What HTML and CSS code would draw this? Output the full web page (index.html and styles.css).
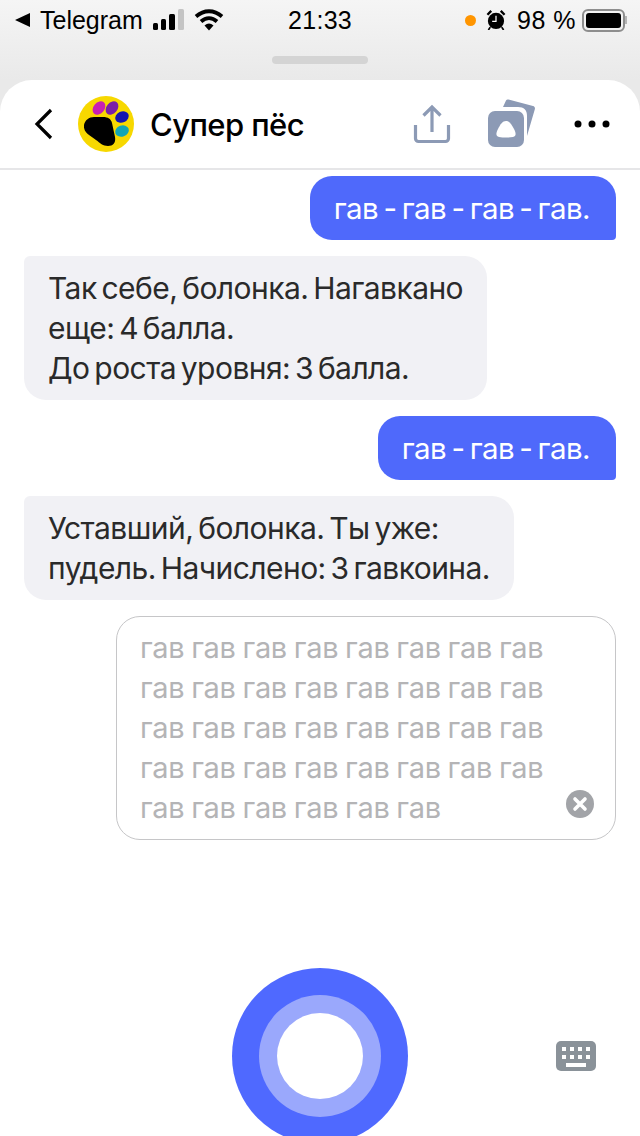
FILE: index.html
```html
<!DOCTYPE html>
<html lang="ru">
<head>
  <meta charset="UTF-8" />
  <meta name="viewport" content="width=device-width, initial-scale=1.0" />
  <title>Супер пёс</title>
  <link rel="stylesheet" href="styles.css">
</head>
<body>
  <div class="screen">
    <div class="statusbar">
      <div class="status-left">
        <svg class="back-tri" width="15" height="14" viewBox="0 0 15 14"><path d="M0 7 15 0v14z" fill="#000"/></svg>
        <span>Telegram</span>
        <svg class="signal" width="33" height="22" viewBox="0 0 33 22">
          <rect x="0" y="14" width="5" height="7" rx="1.5" fill="#000"/>
          <rect x="8" y="10" width="5" height="11" rx="1.5" fill="#000"/>
          <rect x="16" y="5" width="6" height="16" rx="1.5" fill="#000"/>
          <rect x="25" y="0" width="6" height="21" rx="1.5" fill="#c4c4c4"/>
        </svg>
        <svg class="wifi" width="30" height="22" viewBox="0 0 30 22">
          <path d="M2 7.500C10 .5 20 .5 28 7.500" fill="none" stroke="#000" stroke-width="3.800"/>
          <path d="M7 12.500c5-4.500 11-4.500 16 0" fill="none" stroke="#000" stroke-width="3.800"/>
          <path d="M10.500 16.500c3-2.800 6-2.800 9 0L15 21.500z" fill="#000"/>
        </svg>
      </div>
      <div class="status-time">21:33</div>
      <div class="status-right">
        <span class="dot"></span>
        <svg class="alarm" width="20" height="20" viewBox="0 0 20 21">
          <circle cx="10" cy="11.500" r="8.500" fill="#000"/>
          <path d="M10 6v6H6" fill="none" stroke="#fff" stroke-width="1.300"/>
          <path d="M1 5 5 1M15 1l4 4" stroke="#000" stroke-width="2.500"/>
          <path d="M4 18l-2 3M16 18l2 3" stroke="#000" stroke-width="1.800"/>
        </svg>
        <span class="battery-text">98 %</span>
        <span class="battery"><span class="battery-fill"></span></span>
        <span class="battery-cap"></span>
      </div>
    </div>
    <div class="grabber"></div>

    <div class="sheet">
      <div class="header">
        <svg class="chevron" width="22" height="32" viewBox="0 0 22 32"><path d="M18 2 4 16l14 14" fill="none" stroke="#000" stroke-width="3.200"/></svg>
        <svg class="avatar" width="56" height="56" viewBox="0 0 56 56">
          <circle cx="28" cy="28" r="28" fill="#f7d800"/>
          <ellipse cx="21" cy="12" rx="7.500" ry="5.500" fill="#c81fb4" transform="rotate(-50 21 12)"/>
          <ellipse cx="34" cy="12" rx="7.500" ry="5.500" fill="#7b1fa8" transform="rotate(-50 34 12)"/>
          <ellipse cx="44" cy="21" rx="7" ry="5.500" fill="#1414b0" transform="rotate(-25 44 21)"/>
          <ellipse cx="44" cy="35" rx="7" ry="5.500" fill="#12a5b5" transform="rotate(-20 44 35)"/>
          <path d="M6 29C7 24 11 21 16 21L25 21C30 21 33 23 34 27L37 41C38 47 35 50 30 50 25 50 22 47 18 44 13 40 5 37 6 29z" fill="#000"/>
        </svg>
        <div class="title">Супер пёс</div>
        <div class="header-actions">
          <svg class="share" width="38" height="40" viewBox="0 0 38 40">
            <path d="M2.500 21v13.500a3 3 0 0 0 3 3h27a3 3 0 0 0 3-3V21" fill="none" stroke="#8c9ab5" stroke-width="3.200"/>
            <path d="M19 28V4M10.500 11.500 19 3l8.500 8.500" fill="none" stroke="#8c9ab5" stroke-width="3.200"/>
          </svg>
          <svg class="cards" width="50" height="50" viewBox="0 0 50 50">
            <path d="M16 8 19 1.500c.5-1 1.500-1.300 2.500-1L46 7c1.500.4 2.200 1.600 1.900 3L40 37V17c0-6-3-9-9-9z" fill="#8c9ab5"/>
            <rect x="1" y="12" width="36" height="36" rx="7" fill="#8c9ab5"/>
            <path d="M19 22c3.500 0 5.500 3 8 8 2.500 5 2 7-1 8-4.500.8-9.500.8-14 0-3-1-3.500-3-1-8 2.500-5 4.500-8 8-8z" fill="#fff"/>
          </svg>
          <svg class="more" width="36" height="8" viewBox="0 0 36 8">
            <circle cx="4" cy="4" r="3.500" fill="#000"/>
            <circle cx="18" cy="4" r="3.500" fill="#000"/>
            <circle cx="32" cy="4" r="3.500" fill="#000"/>
          </svg>
        </div>
      </div>

      <div class="chat">
        <div class="msg msg-user">гав - гав - гав - гав.</div>
        <div class="msg msg-bot">Так себе, болонка. Нагавкано<br>еще: 4 балла.<br>До роста уровня: 3 балла.</div>
        <div class="msg msg-user">гав - гав - гав.</div>
        <div class="msg msg-bot">Уставший, болонка. Ты уже:<br>пудель. Начислено: 3 гавкоина.</div>
        <div class="input-box">
          <div class="input-text">гав гав гав гав гав гав гав гав<br>гав гав гав гав гав гав гав гав<br>гав гав гав гав гав гав гав гав<br>гав гав гав гав гав гав гав гав<br>гав гав гав гав гав гав</div>
          <svg class="clear" width="28" height="28" viewBox="0 0 28 28">
            <circle cx="14" cy="14" r="14" fill="#a2a4a8"/>
            <path d="M9 9l10 10M19 9 9 19" stroke="#fff" stroke-width="3.600" stroke-linecap="round"/>
          </svg>
        </div>
      </div>

      <div class="voice-bar">
        <div class="voice-outer"><div class="voice-mid"><div class="voice-inner"></div></div></div>
        <svg class="keyboard" width="40" height="30" viewBox="0 0 40 30">
          <rect width="40" height="30" rx="5" fill="#8a9299"/>
          <g fill="#fff">
            <rect x="6" y="6" width="4" height="4"/><rect x="14" y="6" width="4" height="4"/><rect x="22" y="6" width="4" height="4"/><rect x="30" y="6" width="4" height="4"/>
            <rect x="6" y="14" width="4" height="4"/><rect x="14" y="14" width="4" height="4"/><rect x="22" y="14" width="4" height="4"/><rect x="30" y="14" width="4" height="4"/>
            <rect x="10" y="22" width="20" height="4"/>
          </g>
        </svg>
      </div>
    </div>
  </div>
</body>
</html>
```
FILE: styles.css
```css
html, body {
  margin: 0;
  padding: 0;
  background-color: #fff;
}

.screen {
  width: 640px;
  height: 1136px;
  overflow: hidden;
  background: linear-gradient(#f5f5f5, #e9e9e9 80px);
  font-family: 'Inter', 'Liberation Sans', sans-serif;
}

.statusbar {
  height: 40px;
  display: flex;
  align-items: center;
  justify-content: space-between;
  padding: 0 13px 0 15px;
  position: relative;
  font-size: 25px;
  color: #000;
  font-family: 'Liberation Sans', sans-serif;
}

.status-left, .status-right {
  display: flex;
  align-items: center;
}

.back-tri {
  margin-right: 10px;
}

.signal {
  margin-left: 10px;
}

.wifi {
  margin-left: 8px;
}

.status-time {
  position: absolute;
  left: 288px;
  top: 6px;
  letter-spacing: 0.3px;
}

.dot {
  width: 11px;
  height: 11px;
  border-radius: 50%;
  background-color: #ff9500;
  margin-right: 10px;
}

.alarm {
  margin-right: 11px;
}

.battery-text {
  margin-right: 6px;
  letter-spacing: 0.5px;
}

.battery {
  width: 43px;
  height: 23px;
  border: 2px solid #8e8e8e;
  border-radius: 6px;
  padding: 2px;
  box-sizing: border-box;
  display: flex;
}

.battery-fill {
  flex: 1;
  background-color: #000;
  border-radius: 3px;
}

.battery-cap {
  width: 2px;
  height: 8px;
  background-color: #b5b5b5;
}

.grabber {
  width: 96px;
  height: 8px;
  margin: 16px auto 16px;
  border-radius: 4px;
  background-color: #d4d4d4;
}

.sheet {
  height: 1056px;
  background-color: #fff;
  border-radius: 32px 32px 0 0;
}

.header {
  height: 88px;
  display: flex;
  align-items: center;
  padding: 0 30px 0 33px;
  border-bottom: 2px solid #e6e6e8;
}

.chevron {
  flex: none;
}

.avatar {
  flex: none;
  margin-left: 23px;
}

.title {
  margin-left: 16px;
  font-size: 31px;
  font-weight: 500;
  letter-spacing: -0.6px;
  color: #000;
}

.header-actions {
  margin-left: auto;
  display: flex;
  align-items: center;
}

.share {
  margin-right: 36px;
}

.cards {
  margin-right: 37px;
}

.chat {
  padding: 6px 24px 0;
  display: flex;
  flex-direction: column;
  align-items: flex-start;
  gap: 16px;
}

.msg {
  padding: 12px 24px;
  font-size: 30px;
  line-height: 40px;
  border-radius: 22px;
  letter-spacing: -0.55px;
  word-spacing: -3px;
  color: #2a2a2a;
  background-color: #f1f1f5;
}

.msg-user {
  align-self: flex-end;
  padding: 12px 26px 12px 24px;
  font-size: 29.5px;
  word-spacing: -2.5px;
  color: #fff;
  background-color: #4f69fb;
  border-bottom-right-radius: 4px;
}

.msg-bot {
  border-top-left-radius: 6px;
}

.input-box {
  align-self: flex-end;
  width: 500px;
  height: 224px;
  box-sizing: border-box;
  padding: 11px 23px;
  border: 1px solid #c6c6c8;
  border-radius: 24px;
  position: relative;
}

.input-text {
  font-size: 29px;
  line-height: 40px;
  letter-spacing: -0.3px;
  word-spacing: -1px;
  color: #b4b4b6;
}

.clear {
  position: absolute;
  right: 21px;
  bottom: 21px;
}

.voice-bar {
  position: relative;
  margin-top: 128px;
  display: flex;
  justify-content: center;
}

.voice-outer {
  width: 176px;
  height: 176px;
  border-radius: 50%;
  background-color: #4f69ff;
  display: flex;
  align-items: center;
  justify-content: center;
}

.voice-mid {
  width: 122px;
  height: 122px;
  border-radius: 50%;
  background-color: #9aa8fc;
  display: flex;
  align-items: center;
  justify-content: center;
}

.voice-inner {
  width: 86px;
  height: 86px;
  border-radius: 50%;
  background-color: #fff;
}

.keyboard {
  position: absolute;
  left: 556px;
  top: 73px;
}
```
